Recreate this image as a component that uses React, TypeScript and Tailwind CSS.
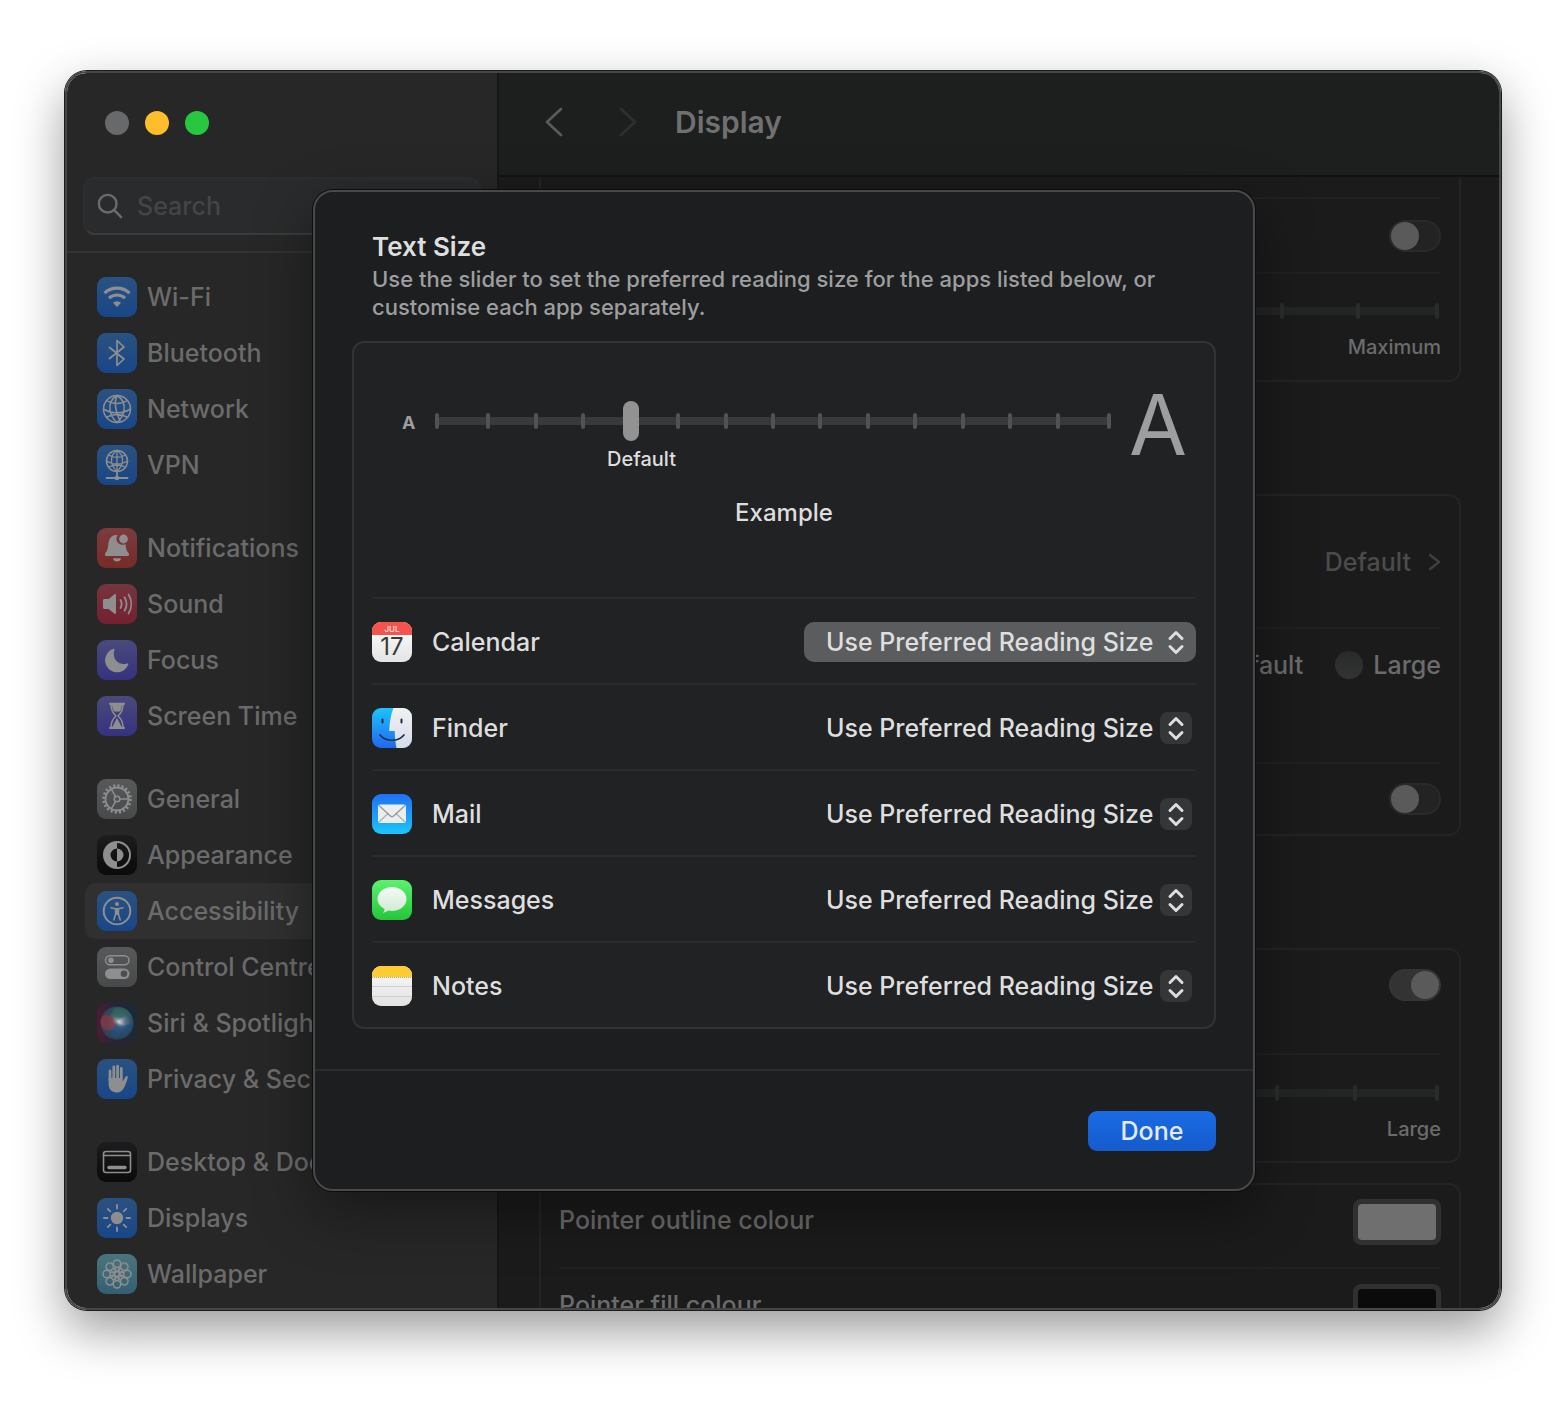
import type { ReactNode } from 'react';

type Tone = 'blue' | 'red' | 'pink' | 'indigo' | 'gray' | 'black' | 'siri' | 'teal';

const toneClasses: Record<Tone, string> = {
  blue: 'from-[#2a5180] to-[#184688]',
  red: 'from-[#7c3b3f] to-[#762b26]',
  pink: 'from-[#76353e] to-[#73202f]',
  indigo: 'from-[#4a4a7c] to-[#363180]',
  gray: 'from-[#58595b] to-[#48494b]',
  black: 'from-[#1d1d1f] to-[#0a0a0a]',
  siri: 'from-[#1d2a35] to-[#1d1f2c]',
  teal: 'from-[#4a757e] to-[#345f73]',
};

function Glyph({ children, filled = false }: { children: ReactNode; filled?: boolean }) {
  return (
    <svg
      viewBox="0 0 40 40"
      className="size-10 text-[#8e8e8f]"
      fill={filled ? 'currentColor' : 'none'}
      stroke={filled ? 'none' : 'currentColor'}
      strokeWidth="1.5"
      strokeLinecap="round"
      strokeLinejoin="round"
      aria-hidden="true"
    >
      {children}
    </svg>
  );
}

const wifi = (
  <Glyph>
    <path d="M7.5 16.2a18 18 0 0 1 25 0" strokeWidth="3.2" strokeLinecap="butt" />
    <path d="M12 21.2a11.6 11.6 0 0 1 16 0" strokeWidth="3.2" strokeLinecap="butt" />
    <path d="M20 30l-4-4.2a5.8 5.8 0 0 1 8 0z" fill="currentColor" stroke="none" />
  </Glyph>
);

const bluetooth = (
  <Glyph>
    <path d="M12.5 14.5 27 26l-7 6.5v-25L27 14 12.5 25.5" strokeWidth="1.7" />
  </Glyph>
);

const network = (
  <Glyph>
    <circle cx="20" cy="20" r="13.5" />
    <path d="M20 6.500c-5 3-8 8-7 14.500.6 5 3 9 7 12.500M20 6.500c5 3 8 8 7 14.500-.6 5-3 9-7 12.500M20 6.500C17 13 17.500 20 23 32M9.500 11.500c6 4 15 4 21 0M6.500 20c8 5 19 5 27 0M10 28c6-3.500 14-3.500 20 0" />
  </Glyph>
);

const vpn = (
  <Glyph>
    <circle cx="20" cy="16" r="10.500" />
    <path d="M20 5.500c-4 2.500-6 6-5.500 11 .5 4 2.500 7 5.500 10M20 5.500c4 2.500 6 6 5.500 11-.5 4-2.500 7-5.500 10M20 5.500v21M11.500 10c5 3 12 3 17 0M9.500 16c6 4 15 4 21 0M12 22c5-2.500 11-2.500 16 0" strokeWidth="1.300" />
    <path d="M20 27v5M9.500 33h21" strokeWidth="1.800" />
    <circle cx="20" cy="33" r="2.300" fill="currentColor" stroke="none" />
  </Glyph>
);

const bell = (
  <Glyph filled>
    <path d="M20.500 7.200a6 6 0 0 0 3.200 9.300 6 6 0 0 0 4.800-.6c.3 4.600 1 7 3.200 9.300.9 1 .3 2.800-1.200 2.800h-21c-1.500 0-2.100-1.800-1.200-2.800 2.600-2.700 2.700-5.600 3.100-9.700C12 10.500 14.800 7.200 18.500 7c.7-.1 1.400 0 2 .2z" />
    <circle cx="26.500" cy="11" r="4.400" />
    <path d="M16 30.200h8a4.100 4.100 0 0 1-8 0z" />
  </Glyph>
);

const speaker = (
  <Glyph>
    <path d="M6 16.500c0-.8.600-1.400 1.400-1.400h4.200l5.600-4.700c.8-.7 1.800-.2 1.800.8v17.600c0 1-1 1.500-1.800.8l-5.600-4.700H7.400c-.8 0-1.400-.6-1.400-1.400z" fill="currentColor" stroke="none" />
    <path d="M23.500 16a8 8 0 0 1 0 8M27.500 13.200a13 13 0 0 1 0 13.600M31.500 10.500a18 18 0 0 1 0 19" strokeWidth="1.800" />
  </Glyph>
);

const moon = (
  <Glyph filled>
    <path d="M16.500 8.800c.7-.3 1.300.3 1 1-3 8.700 3.800 16.200 12.700 13.600.8-.2 1.400.4 1.100 1.100A12 12 0 1 1 16.500 8.800z" />
  </Glyph>
);

const hourglass = (
  <Glyph>
    <path d="M13 7.800h14M13 32h14" strokeWidth="2.200" />
    <path d="M14 8.500c0 6 1.500 8.500 5 11.500-3.500 3-5 5.500-5 11.500h12c0-6-1.500-8.500-5-11.500 3.500-3 5-5.500 5-11.500z" />
    <path d="M15 9h10c-.4 3-1 4.500-2 6.500h-6c-1-2-1.600-3.500-2-6.500zM20 22l5 9.500H15z" fill="currentColor" stroke="none" />
  </Glyph>
);

const gear = (
  <Glyph>
    <circle cx="20" cy="20" r="13.500" strokeWidth="2.600" strokeDasharray="2.100 2.141" strokeLinecap="butt" />
    <circle cx="20" cy="20" r="11.500" strokeWidth="1.800" />
    <circle cx="20" cy="20" r="2.800" />
    <path d="M22.800 20h8.500M18.600 17.600l-4.300-7.400M18.600 22.400l-4.300 7.400" />
  </Glyph>
);

const contrast = (
  <Glyph>
    <circle cx="20" cy="20" r="13" strokeWidth="2" />
    <path d="M20 7v6.500a6.500 6.500 0 0 0 0 13V33a13 13 0 0 1 0-26z" fill="currentColor" stroke="none" />
    <path d="M20 13.500a6.500 6.500 0 0 1 0 13z" fill="currentColor" stroke="none" />
  </Glyph>
);

const figure = (
  <Glyph>
    <circle cx="20" cy="20" r="13.300" strokeWidth="2" />
    <circle cx="20" cy="13" r="2" fill="currentColor" stroke="none" />
    <path d="M14 16.800l4.500 1h3l4.500-1M18.600 18v5l-1.800 6M21.400 18v5l1.800 6" strokeWidth="1.600" />
    <path d="M18.200 17.500h3.600v6.500h-3.600z" fill="currentColor" stroke="none" />
  </Glyph>
);

const switches = (
  <Glyph>
    <rect x="8.500" y="8.800" width="23.500" height="9" rx="4.500" />
    <circle cx="14" cy="13.300" r="2.800" fill="currentColor" stroke="none" />
    <rect x="8" y="21.500" width="24.500" height="10.500" rx="5.250" fill="currentColor" stroke="none" />
    <circle cx="27" cy="26.700" r="3.300" fill="#4c4d4f" stroke="none" />
  </Glyph>
);

const siri = (
  <svg viewBox="0 0 40 40" className="size-10" aria-hidden="true">
    <defs>
      <linearGradient id="siri-back" x1="0" x2="1">
        <stop offset="0" stopColor="#4b1c33" />
        <stop offset="0.5" stopColor="#252437" />
        <stop offset="1" stopColor="#1a2a36" />
      </linearGradient>
      <radialGradient id="siri-glow" cx="0.58" cy="0.45" r="0.55">
        <stop offset="0" stopColor="#b5bfc6" />
        <stop offset="0.25" stopColor="#6b7f90" />
        <stop offset="0.7" stopColor="#2f5a72" stopOpacity="0.7" />
        <stop offset="1" stopColor="#30606a" stopOpacity="0.5" />
      </radialGradient>
      <radialGradient id="siri-core">
        <stop offset="0" stopColor="#c8d2d8" />
        <stop offset="1" stopColor="#7d95a8" stopOpacity="0" />
      </radialGradient>
    </defs>
    <rect width="40" height="40" rx="9" fill="url(#siri-back)" />
    <circle cx="20" cy="20" r="16.500" fill="url(#siri-glow)" />
    <path d="M5 14c5-5 12 0 16 6-5 7-11 9-15 5-3-4-3-8-1-11z" fill="#8a3546" opacity="0.75" />
    <path d="M16 6c7-4 16 0 19 8-6-2-12 0-15 5-3-4-5-8-4-13z" fill="#2e6658" opacity="0.7" />
    <path d="M13 33c2-6 4-10 8-13 4 2 9 3 14 1-2 10-12 16-22 12z" fill="#244b7c" opacity="0.7" />
    <ellipse cx="22" cy="19" rx="8" ry="4.500" transform="rotate(35 22 19)" fill="url(#siri-core)" />
  </svg>
);

const hand = (
  <Glyph>
    <path d="M13 21v-9M16.800 19v-11M20.600 19V7.200M24.300 19V9.500" strokeWidth="2.800" />
    <path d="M11.600 19h14.100v3.500l2.700-4.600c.9-1.500 2.900-.9 2.400.8-1.200 3.700-2.300 7.500-3.900 10.300-1.500 2.700-3.700 4.500-7.100 4.500-5.500 0-8.200-3.700-8.200-8.500z" fill="currentColor" stroke="none" />
  </Glyph>
);

const dock = (
  <Glyph>
    <rect x="6.500" y="9.500" width="27" height="21" rx="2.500" strokeWidth="1.600" />
    <path d="M7 13.500h26" />
    <path d="M12 25.500h16" strokeWidth="3.400" />
  </Glyph>
);

const sun = (
  <Glyph>
    <circle cx="20" cy="20" r="6.200" fill="currentColor" stroke="none" />
    <path d="M20 7v3.500M20 29.500V33M7 20h3.500M29.500 20H33M10.800 10.800l2.500 2.500M26.700 26.700l2.500 2.500M10.800 29.200l2.500-2.500M26.700 13.300l2.500-2.500" strokeWidth="1.900" />
  </Glyph>
);

const flower = (
  <Glyph>
    {[0, 45, 90, 135, 180, 225, 270, 315].map((angle) => (
      <g key={angle} transform={`rotate(${angle} 20 20)`}>
        <circle cx="20" cy="9.700" r="3.700" />
        <path d="M20 17.500c-1.600-1-2-3-1.500-4.200M20 17.500c1.600-1 2-3 1.500-4.200" />
      </g>
    ))}
    <circle cx="20" cy="20" r="2.600" />
  </Glyph>
);

type NavItem = { label: string; tone: Tone; icon: ReactNode };

const navGroups: NavItem[][] = [
  [
    { label: 'Wi-Fi', tone: 'blue', icon: wifi },
    { label: 'Bluetooth', tone: 'blue', icon: bluetooth },
    { label: 'Network', tone: 'blue', icon: network },
    { label: 'VPN', tone: 'blue', icon: vpn },
  ],
  [
    { label: 'Notifications', tone: 'red', icon: bell },
    { label: 'Sound', tone: 'pink', icon: speaker },
    { label: 'Focus', tone: 'indigo', icon: moon },
    { label: 'Screen Time', tone: 'indigo', icon: hourglass },
  ],
  [
    { label: 'General', tone: 'gray', icon: gear },
    { label: 'Appearance', tone: 'black', icon: contrast },
    { label: 'Accessibility', tone: 'blue', icon: figure },
    { label: 'Control Centre', tone: 'gray', icon: switches },
    { label: 'Siri & Spotlight', tone: 'siri', icon: siri },
    { label: 'Privacy & Security', tone: 'blue', icon: hand },
  ],
  [
    { label: 'Desktop & Dock', tone: 'black', icon: dock },
    { label: 'Displays', tone: 'blue', icon: sun },
    { label: 'Wallpaper', tone: 'teal', icon: flower },
  ],
];

const calendarIcon = (
  <svg viewBox="0 0 40 40" className="size-10" aria-hidden="true">
    <defs>
      <linearGradient id="cal-page" x2="0" y2="1">
        <stop offset="0" stopColor="#ffffff" />
        <stop offset="1" stopColor="#e4e4e4" />
      </linearGradient>
    </defs>
    <rect width="40" height="40" rx="9" fill="url(#cal-page)" />
    <path d="M9 0h22a9 9 0 0 1 9 9v4H0V9a9 9 0 0 1 9-9z" fill="#f4544b" />
    <text x="20" y="9.500" textAnchor="middle" fontSize="8" fontWeight="600" fill="#fbd9d6">JUL</text>
    <text x="20" y="33" textAnchor="middle" fontSize="24" fontWeight="400" fill="#3b3b3b">17</text>
  </svg>
);

const finderIcon = (
  <svg viewBox="0 0 40 40" className="size-10" aria-hidden="true">
    <defs>
      <linearGradient id="finder-blue" x2="0" y2="1">
        <stop offset="0" stopColor="#1cc4fb" />
        <stop offset="1" stopColor="#2168ee" />
      </linearGradient>
      <linearGradient id="finder-white" x2="0" y2="1">
        <stop offset="0" stopColor="#f1f1f2" />
        <stop offset="1" stopColor="#d5dcec" />
      </linearGradient>
    </defs>
    <rect width="40" height="40" rx="9" fill="url(#finder-blue)" />
    <path d="M21.500 0H31a9 9 0 0 1 9 9v22a9 9 0 0 1-9 9h-6.500c-1-5-1.800-11-1.700-17h-5.600C17.500 14 19 6 21.500 0z" fill="url(#finder-white)" />
    <path d="M10.500 11.500v3M29.500 11.500v3" stroke="#222d3d" strokeWidth="2" strokeLinecap="round" />
    <path d="M8 27c6 7 18 7 24 0" fill="none" stroke="#1c2f4c" strokeWidth="1.700" strokeLinecap="round" />
  </svg>
);

const mailIcon = (
  <svg viewBox="0 0 40 40" className="size-10" aria-hidden="true">
    <defs>
      <linearGradient id="mail-sky" x2="0" y2="1">
        <stop offset="0" stopColor="#2070f2" />
        <stop offset="1" stopColor="#1cc5fb" />
      </linearGradient>
    </defs>
    <rect width="40" height="40" rx="9" fill="url(#mail-sky)" />
    <rect x="6" y="10.500" width="28" height="18.500" rx="2.200" fill="#ededee" />
    <path d="M7 28l9.500-9M33 28l-9.500-9" stroke="#a9adb2" strokeWidth="1.100" fill="none" />
    <path d="M7 11.500l11 10.300c1.200 1.100 2.800 1.100 4 0l11-10.300" stroke="#94989d" strokeWidth="1.300" fill="none" />
  </svg>
);

const messagesIcon = (
  <svg viewBox="0 0 40 40" className="size-10" aria-hidden="true">
    <defs>
      <linearGradient id="msg-green" x2="0" y2="1">
        <stop offset="0" stopColor="#5cf26f" />
        <stop offset="1" stopColor="#23c63a" />
      </linearGradient>
      <linearGradient id="msg-bubble" x2="0" y2="1">
        <stop offset="0" stopColor="#f6fbf6" />
        <stop offset="1" stopColor="#cfe8d1" />
      </linearGradient>
    </defs>
    <rect width="40" height="40" rx="9" fill="url(#msg-green)" />
    <path d="M20 7c8 0 14.500 5.300 14.500 12S28 31 20 31c-1.500 0-2.900-.2-4.200-.5-1.300 1.300-3 2.200-4.800 2.400 1-1.100 1.500-2.500 1.500-4C8.500 26.800 5.500 23.200 5.500 19 5.500 12.300 12 7 20 7z" fill="url(#msg-bubble)" />
  </svg>
);

const notesIcon = (
  <svg viewBox="0 0 40 40" className="size-10" aria-hidden="true">
    <defs>
      <linearGradient id="notes-page" x2="0" y2="1">
        <stop offset="0" stopColor="#fafafa" />
        <stop offset="1" stopColor="#e2e2e3" />
      </linearGradient>
    </defs>
    <rect width="40" height="40" rx="9" fill="url(#notes-page)" />
    <path d="M9 0h22a9 9 0 0 1 9 9v2H0V9a9 9 0 0 1 9-9z" fill="#fecb32" />
    <path d="M0 11.500h40" stroke="#b9a679" strokeWidth="1" strokeDasharray="1 1" />
    <path d="M0 20.500h40M0 30.500h40" stroke="#cfcfd0" strokeWidth="1" />
  </svg>
);

const apps = [
  { name: 'Calendar', icon: calendarIcon, active: true },
  { name: 'Finder', icon: finderIcon, active: false },
  { name: 'Mail', icon: mailIcon, active: false },
  { name: 'Messages', icon: messagesIcon, active: false },
  { name: 'Notes', icon: notesIcon, active: false },
];

type SliderProps = { label: string; steps: number; value: number; dim?: boolean };

function Slider({ label, steps, value, dim = false }: SliderProps) {
  const ticks = Array.from({ length: steps + 1 }, (_, i) => i);
  // the two end ticks sit flush with the ends of the track
  const tickLeft = (i: number) => {
    if (i === 0) return '2px';
    if (i === steps) return 'calc(100% - 6px)';
    return `calc(6px + (100% - 16px) * ${i / steps})`;
  };
  return (
    <div className="relative h-10 w-full">
      <div className={`absolute inset-x-1 top-4 h-2 ${dim ? 'bg-[#232424]' : 'bg-[#38393a]'}`} />
      {ticks.map((i) => (
        <span
          key={i}
          style={{ left: tickLeft(i) }}
          className={`absolute top-3 h-4 w-1 rounded-xs ${dim ? 'bg-[#2a2b2c]' : 'bg-[#515253]'}`}
        />
      ))}
      <input
        type="range"
        aria-label={label}
        min={0}
        max={steps}
        defaultValue={value}
        className="absolute inset-0 h-10 w-full appearance-none bg-transparent [&::-webkit-slider-thumb]:h-10 [&::-webkit-slider-thumb]:w-4 [&::-webkit-slider-thumb]:appearance-none [&::-webkit-slider-thumb]:rounded-full [&::-webkit-slider-thumb]:bg-[#929293]"
      />
    </div>
  );
}

function Toggle({ label, on = false }: { label: string; on?: boolean }) {
  return (
    <input
      type="checkbox"
      role="switch"
      aria-label={label}
      defaultChecked={on}
      className="h-8 w-[52px] appearance-none rounded-full border-2 border-[#2a2a2a] bg-[#232323] before:block before:size-7 before:rounded-full before:bg-[#5a5a5a] checked:border-[#353535] checked:bg-[#333333] checked:before:ml-5"
    />
  );
}

function UpDown() {
  return (
    <svg viewBox="0 0 32 32" className="size-8" fill="none" stroke="#dededf" strokeWidth="3" strokeLinecap="round" strokeLinejoin="round" aria-hidden="true">
      <path d="M10 12.500 16 6.500l6 6M10 20.500l6 6 6-6" />
    </svg>
  );
}

function Sidebar() {
  return (
    <aside className="flex w-[432px] shrink-0 flex-col border-r-2 border-[#161616] bg-[#272727]">
      <div className="flex gap-4 px-[38px] pt-[38px]">
        <button type="button" aria-label="Close" className="size-6 rounded-full bg-[#68696b]" />
        <button type="button" aria-label="Minimise" className="size-6 rounded-full bg-[#febe2c]" />
        <button type="button" aria-label="Zoom" className="size-6 rounded-full bg-[#27c840]" />
      </div>
      <label className="mx-4 mt-[42px] flex h-[58px] items-center gap-3.5 rounded-xl border-2 border-[#2d2e2f] border-b-[#3a3b3b] bg-[#2a2b2c] px-3">
        <svg viewBox="0 0 28 28" className="size-[26px] shrink-0" fill="none" stroke="#6b6b6b" strokeWidth="2.600" strokeLinecap="round" aria-hidden="true">
          <circle cx="11.500" cy="11.500" r="9.500" />
          <path d="M18.500 18.500l7.500 7.500" />
        </svg>
        <input type="search" placeholder="Search" className="w-full bg-transparent placeholder:text-[#444546]" />
      </label>
      <nav aria-label="Settings" className="mt-4 flex flex-col gap-[27px] border-t-2 border-[#323232] px-[18px] pt-4">
        {navGroups.map((group) => (
          <ul key={group[0].label}>
            {group.map((item) => (
              <li key={item.label}>
                <a
                  href="#"
                  aria-current={item.label === 'Accessibility' ? 'page' : undefined}
                  className="flex h-14 items-center gap-2.5 rounded-[10px] px-3 whitespace-nowrap aria-[current=page]:bg-[#303030]"
                >
                  <span className={`size-10 shrink-0 overflow-hidden rounded-[9px] bg-linear-to-b ${toneClasses[item.tone]}`}>
                    {item.icon}
                  </span>
                  {item.label}
                </a>
              </li>
            ))}
          </ul>
        ))}
      </nav>
    </aside>
  );
}

const groupBorder = 'border-[#232425]';
const rowBorder = 'border-[#202122]';

function DisplayPane() {
  return (
    <main className="flex min-w-0 flex-1 flex-col bg-[#1b1b1c]">
      <header className="flex h-[104px] shrink-0 items-center border-b-2 border-[#121212] bg-[#1d1e1e] px-11 pb-1">
        <button type="button" aria-label="Back" className="mr-14">
          <svg viewBox="0 0 20 32" className="h-8 w-5" fill="none" stroke="#5a5b5b" strokeWidth="2.600" strokeLinecap="round" strokeLinejoin="round" aria-hidden="true">
            <path d="M18 3 4 16l14 13" />
          </svg>
        </button>
        <button type="button" aria-label="Forward" className="mr-9">
          <svg viewBox="0 0 20 32" className="h-8 w-5" fill="none" stroke="#2e2f30" strokeWidth="2.600" strokeLinecap="round" strokeLinejoin="round" aria-hidden="true">
            <path d="M2 3l14 13L2 29" />
          </svg>
        </button>
        <h1 className="text-[30px] font-semibold text-[#707071]">Display</h1>
      </header>

      <div className="flex min-h-0 flex-1 flex-col overflow-hidden pr-[38px] pl-10 *:shrink-0">
        <section className={`rounded-b-xl border-2 border-t-0 px-[18px] pt-5 ${groupBorder}`}>
          <div className={`flex h-[75px] items-center justify-end border-t-2 ${rowBorder}`}>
            <Toggle label="Display option" />
          </div>
          <div className={`flex h-[108px] flex-col items-end border-t-2 pt-[17px] ${rowBorder}`}>
            <div className="w-[770px]">
              <Slider label="Display contrast" steps={10} value={3} dim />
            </div>
            <span className="text-xl leading-8">Maximum</span>
          </div>
        </section>

        <section className={`mt-28 rounded-xl border-2 px-[18px] ${groupBorder}`}>
          <button type="button" className="flex h-[131px] w-full items-center justify-end gap-4 text-[#4b4b4c]">
            Default
            <svg viewBox="0 0 14 20" className="h-5 w-3.5" fill="none" stroke="#3f4041" strokeWidth="2.400" strokeLinecap="round" strokeLinejoin="round" aria-hidden="true">
              <path d="M3 3l9 7-9 7" />
            </svg>
          </button>
          <fieldset aria-label="Menu bar size" className={`flex h-[135px] items-start justify-end gap-8 border-t-2 pt-[18px] ${rowBorder}`}>
            {['Default', 'Large'].map((size) => (
              <label key={size} className="flex items-center gap-2.5 leading-9">
                <input type="radio" name="menu-bar-size" className="size-7 appearance-none rounded-full bg-linear-to-b from-[#292a2a] to-[#323332]" />
                {size}
              </label>
            ))}
          </fieldset>
          <div className={`flex h-[72px] items-center justify-end border-t-2 ${rowBorder}`}>
            <Toggle label="Window option" />
          </div>
        </section>

        <section className={`mt-28 rounded-xl border-2 px-[18px] ${groupBorder}`}>
          <div className="flex h-[103px] items-start justify-end pt-[19px]">
            <Toggle label="Shake to locate" on />
          </div>
          <div className={`flex h-[108px] flex-col items-end border-t-2 pt-[18px] ${rowBorder}`}>
            <div className="w-[796px]">
              <Slider label="Pointer size" steps={10} value={2} dim />
            </div>
            <span className="text-xl leading-8">Large</span>
          </div>
        </section>

        <section className={`mt-5 rounded-xl border-2 px-[18px] pb-5 ${groupBorder}`}>
          {[
            { label: 'Pointer outline colour', colour: '#6f6f6f' },
            { label: 'Pointer fill colour', colour: '#0b0b0b' },
          ].map(({ label, colour }) => (
            <label key={label} className={`flex h-[84px] items-center justify-between border-b-2 pb-2 last:border-0 ${rowBorder}`}>
              <span className="pb-1">{label}</span>
              <input
                type="color"
                defaultValue={colour}
                className="h-[46px] w-[88px] appearance-none rounded-lg bg-[#303031] p-[5px] [&::-webkit-color-swatch]:rounded-sm [&::-webkit-color-swatch]:border-0 [&::-webkit-color-swatch-wrapper]:p-0"
              />
            </label>
          ))}
        </section>
      </div>
    </main>
  );
}

function TextSizeDialog() {
  return (
    <div
      role="dialog"
      aria-labelledby="text-size-title"
      className="w-full max-w-[942px] rounded-[20px] border-2 border-[#48494a] bg-[#1d1e20] pt-[37px] text-[#dededf] shadow-[0_0_0_1px_#0c0c0c,0_20px_60px_rgba(0,0,0,0.4)]"
    >
      <div className="px-[57px]">
        <h2 id="text-size-title" className="text-[26px] leading-9 font-semibold">Text Size</h2>
        <p className="text-[22px] leading-7 text-[#9d9e9f]">
          Use the slider to set the preferred reading size for the apps listed below, or customise each app separately.
        </p>
      </div>

      <div className="mx-[37px] mt-5 mb-10 rounded-xl border-2 border-[#323334] bg-[#212223] px-[18px]">
        <div className="flex h-[254px] flex-col pt-10">
          <div className="flex pr-[13px] pl-[30px] text-[#9d9e9f]">
            <span className="mt-5 w-[31px] text-lg leading-10 font-bold">A</span>
            <div className="mt-[18px] flex-1">
              <Slider label="Text size" steps={14} value={4} />
              <div className="mt-1 pl-[174px] text-xl leading-7 text-[#dededf]">Default</div>
            </div>
            <span className="w-[70px] pl-4 text-[84px] leading-none font-normal">A</span>
          </div>
          <p className="mt-6 text-center text-2xl">Example</p>
        </div>
        {apps.map(({ name, icon, active }) => (
          <div key={name} className="flex h-[86px] items-center gap-5 border-t-2 border-[#2a2b2c] pt-0.5">
            {icon}
            <label htmlFor={`size-${name}`} className="flex-1">{name}</label>
            <div className="relative">
              <select
                id={`size-${name}`}
                className={`h-10 appearance-none rounded-[10px] pr-[42px] pl-[22px] ${active ? 'bg-[#5b5c5d]' : 'bg-transparent'}`}
              >
                <option>Use Preferred Reading Size</option>
              </select>
              <span className={`pointer-events-none absolute top-1 right-1 rounded-lg ${active ? '' : 'bg-[#353637]'}`}>
                <UpDown />
              </span>
            </div>
          </div>
        ))}
      </div>

      <div className="flex justify-end border-t-2 border-[#2b2c2e] px-[37px] pt-10 pb-[38px]">
        <button type="button" className="h-10 w-32 rounded-[9px] bg-linear-to-b from-[#1a6be5] to-[#155bcc] text-[#e4ecf9]">
          Done
        </button>
      </div>
    </div>
  );
}

export default function App() {
  return (
    <div className="flex h-screen bg-white pt-[71px] pr-[59px] pb-[94px] pl-[65px] font-['Inter',sans-serif] text-[25px] leading-8 font-medium text-[#6b6b6c]">
      <div className="relative flex min-w-0 flex-1 overflow-hidden rounded-[22px] border-2 border-[#454646] shadow-[0_0_0_1px_#1c1c1c,0_20px_50px_rgba(0,0,0,0.4)]">
        <Sidebar />
        <DisplayPane />
        <div className="absolute inset-0 flex items-center justify-center pl-0.5">
          <TextSizeDialog />
        </div>
      </div>
    </div>
  );
}
